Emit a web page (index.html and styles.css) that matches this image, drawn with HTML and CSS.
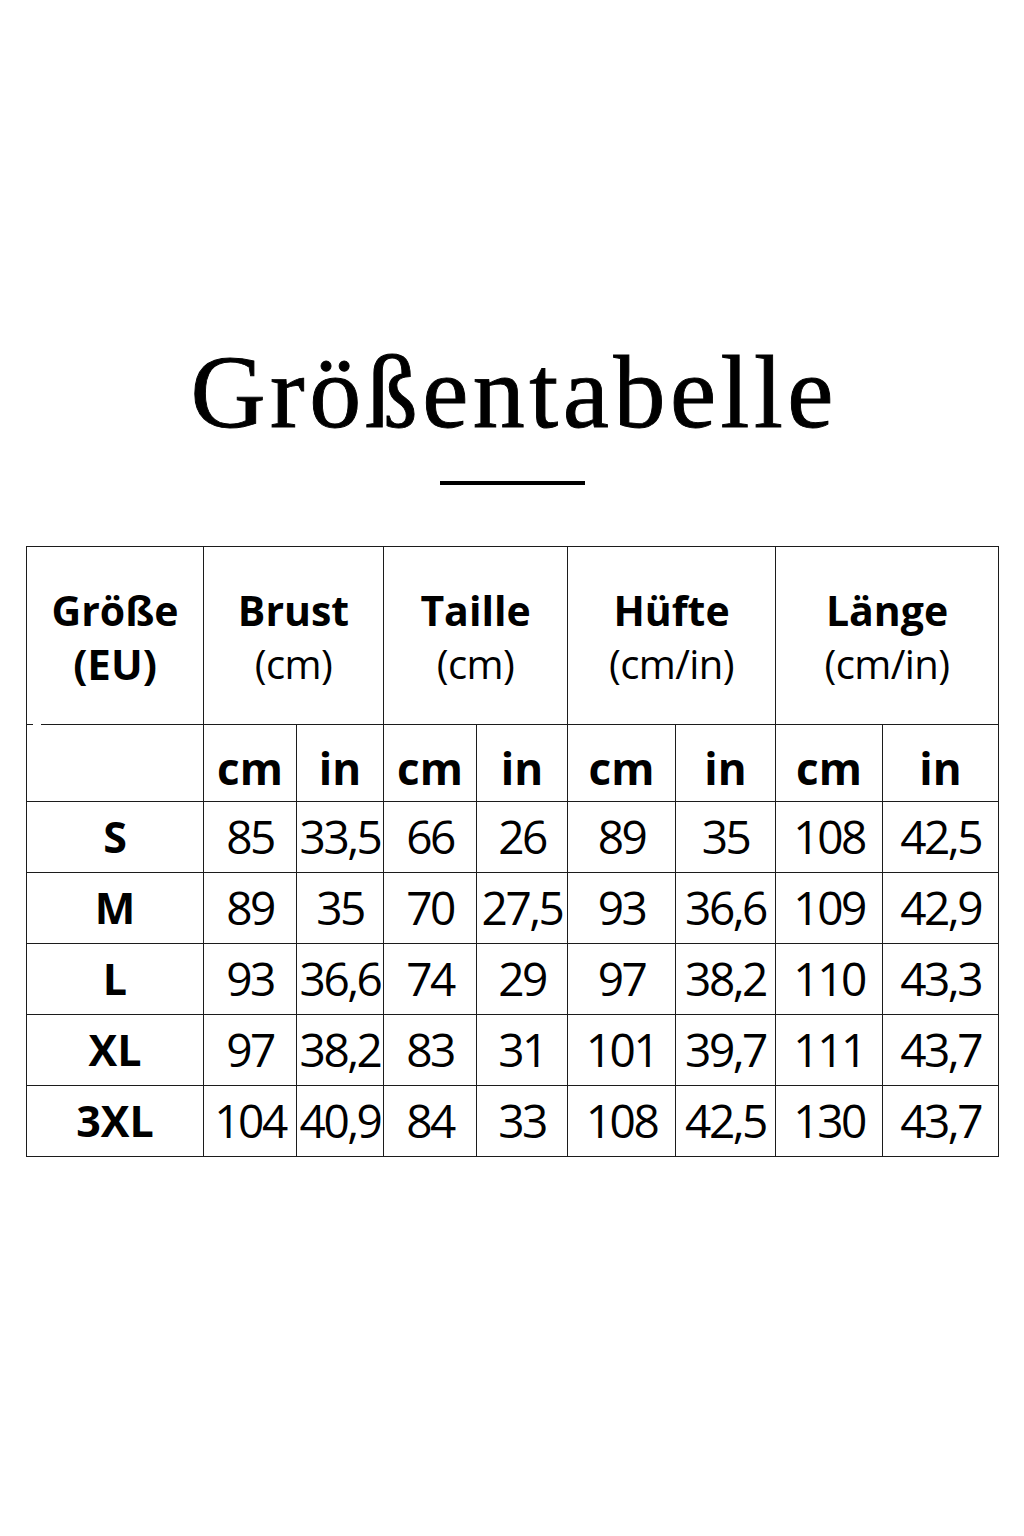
FILE: index.html
```html
<!DOCTYPE html>
<html lang="de">
<head>
<meta charset="utf-8">
<title>Größentabelle</title>
<link rel="stylesheet" href="styles.css">
</head>
<body>
<main class="page">
  <h1 class="title">Größentabelle</h1>
  <div class="rule"></div>
  <table class="chart">
    <colgroup>
      <col class="c-size">
      <col class="c1"><col class="c2">
      <col class="c3"><col class="c4">
      <col class="c5"><col class="c6">
      <col class="c7"><col class="c8">
    </colgroup>
    <thead>
      <tr class="head">
        <th><b>Größe</b><span class="bold">(EU)</span></th>
        <th colspan="2"><b>Brust</b><span>(cm)</span></th>
        <th colspan="2"><b>Taille</b><span>(cm)</span></th>
        <th colspan="2"><b>Hüfte</b><span>(cm/in)</span></th>
        <th colspan="2"><b>Länge</b><span>(cm/in)</span></th>
      </tr>
      <tr class="sub">
        <th class="gap"></th>
        <th>cm</th><th>in</th>
        <th>cm</th><th>in</th>
        <th>cm</th><th>in</th>
        <th>cm</th><th>in</th>
      </tr>
    </thead>
    <tbody>
      <tr><th>S</th><td>85</td><td>33,5</td><td>66</td><td>26</td><td>89</td><td>35</td><td>108</td><td>42,5</td></tr>
      <tr><th>M</th><td>89</td><td>35</td><td>70</td><td>27,5</td><td>93</td><td>36,6</td><td>109</td><td>42,9</td></tr>
      <tr><th>L</th><td>93</td><td>36,6</td><td>74</td><td>29</td><td>97</td><td>38,2</td><td>110</td><td>43,3</td></tr>
      <tr><th>XL</th><td>97</td><td>38,2</td><td>83</td><td>31</td><td>101</td><td>39,7</td><td>111</td><td>43,7</td></tr>
      <tr><th>3XL</th><td>104</td><td>40,9</td><td>84</td><td>33</td><td>108</td><td>42,5</td><td>130</td><td>43,7</td></tr>
    </tbody>
  </table>
</main>
</body>
</html>
```

FILE: styles.css
```css
html, body {
  margin: 0;
  padding: 0;
  background: #ffffff;
}

body {
  width: 1024px;
  height: 1536px;
  color: #000;
  font-family: "Open Sans", "Noto Sans", sans-serif;
}

.page {
  display: flex;
  flex-direction: column;
  align-items: center;
  padding-top: 340px;
}

.title {
  margin: 0;
  font-family: "Liberation Serif", "Times New Roman", serif;
  font-weight: 400;
  font-size: 104px;
  line-height: 1;
  letter-spacing: 4.5px;
  padding-left: 4.5px;
  color: #000;
  -webkit-text-stroke: 0.9px #000;
}

.rule {
  width: 145px;
  height: 4px;
  background: #000;
  margin-top: 37px;
  margin-bottom: 61px;
}

.chart {
  align-self: flex-start;
  margin-left: 26px;
  border-collapse: collapse;
  table-layout: fixed;
  width: 972px;
}

.chart th,
.chart td {
  border: 1px solid #1c1c1c;
  padding: 0;
  text-align: center;
  vertical-align: middle;
}

.c-size { width: 177px; }
.c1 { width: 93px; }
.c2 { width: 87px; }
.c3 { width: 93px; }
.c4 { width: 91px; }
.c5 { width: 108px; }
.c6 { width: 100px; }
.c7 { width: 107px; }
.c8 { width: 116px; }

.head th {
  height: 178px;
  padding-top: 3px;
  box-sizing: border-box;
  line-height: 53px;
}

.head b {
  display: block;
  font-weight: 700;
  font-size: 41px;
}

.head span {
  display: block;
  font-weight: 400;
  font-size: 40px;
  letter-spacing: -0.6px;
}

.head span.bold {
  font-weight: 700;
  font-size: 42px;
  letter-spacing: 0;
}

.sub th {
  height: 77px;
  box-sizing: border-box;
  padding-top: 9px;
  font-weight: 700;
  font-size: 44px;
  line-height: 60px;
}

.sub th.gap {
  position: relative;
}

.sub th.gap::before {
  content: "";
  position: absolute;
  top: -2px;
  left: 6px;
  width: 8px;
  height: 3px;
  background: #fff;
}

tbody tr {
  height: 71px;
}

tbody th {
  font-weight: 700;
  font-size: 43px;
  line-height: 1.2;
}

tbody td {
  font-weight: 400;
  font-size: 46px;
  letter-spacing: -2.5px;
  line-height: 1.2;
  padding-left: 2px;
}
```
